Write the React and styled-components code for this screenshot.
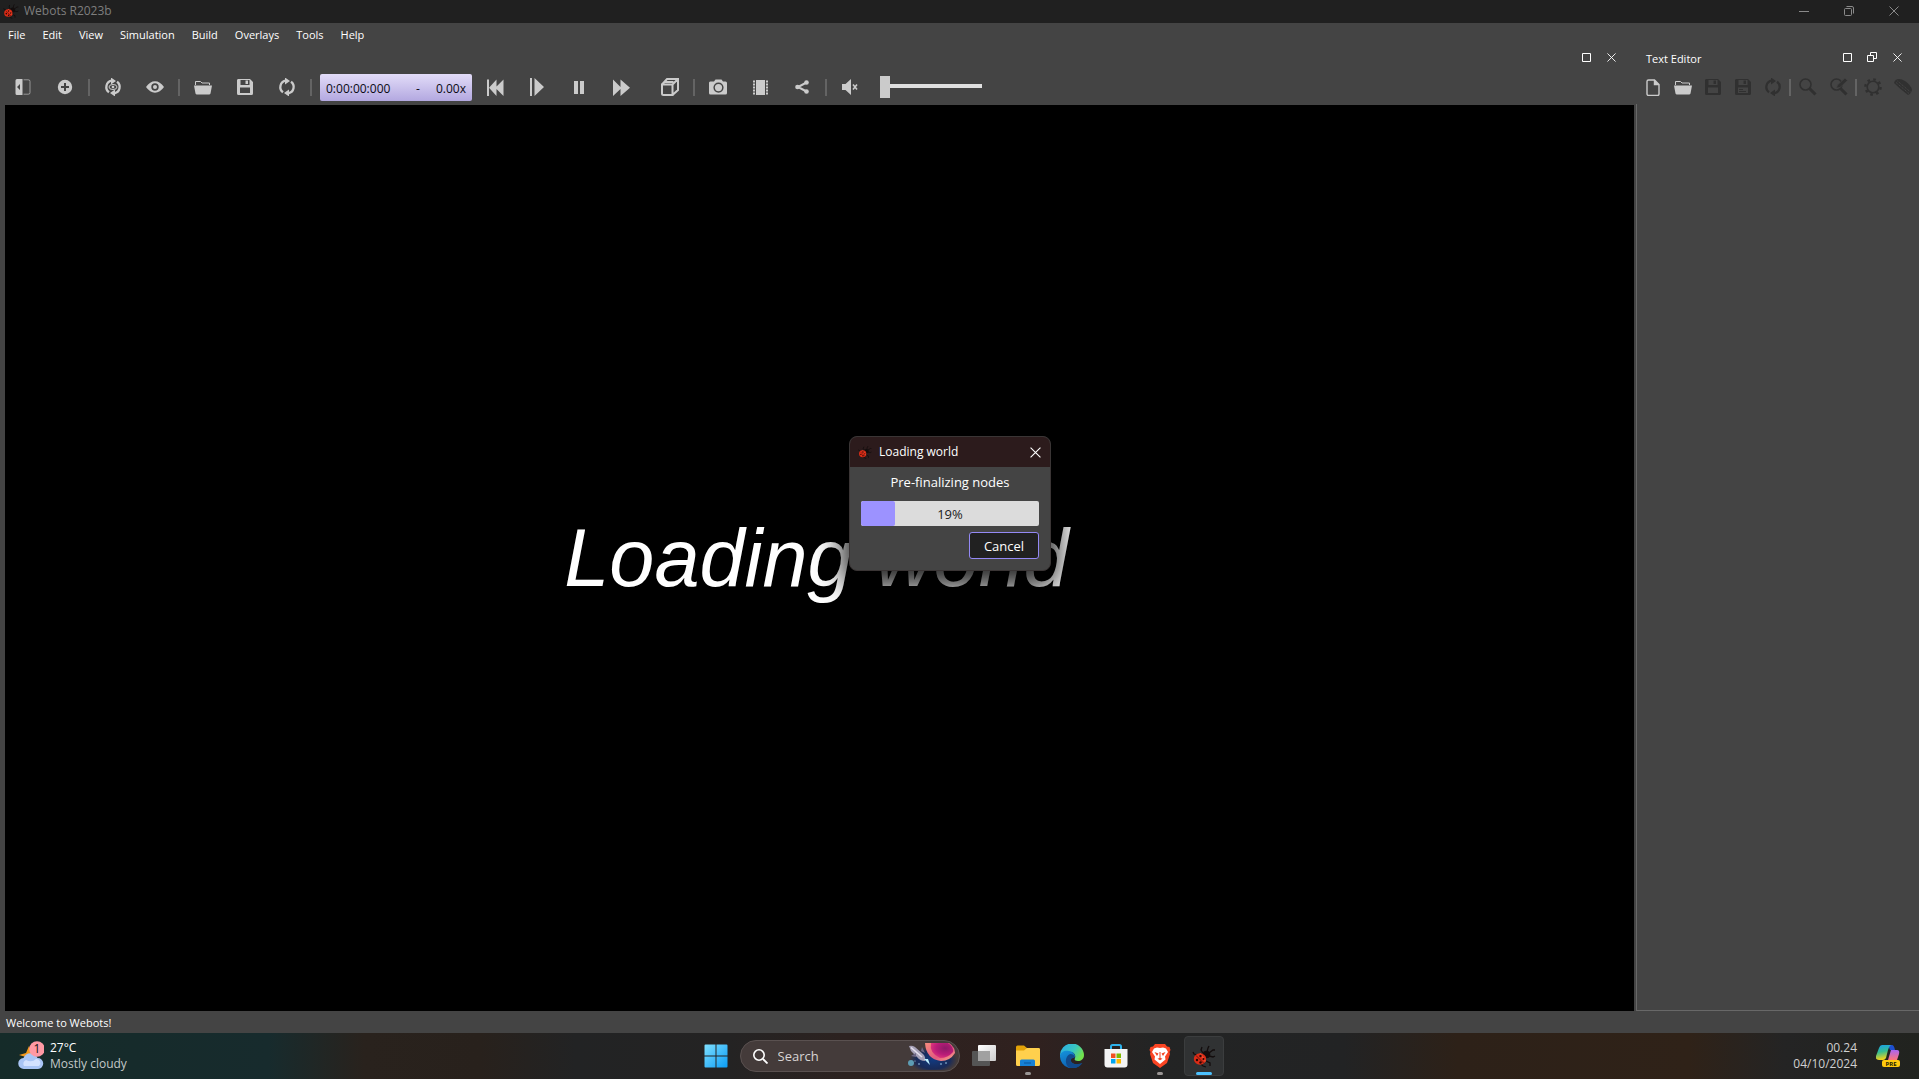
import React from "react";
import styled, { createGlobalStyle } from "styled-components";

const ui = '"Open Sans", "Noto Sans", sans-serif';

const Global = createGlobalStyle`
  *, *::before, *::after { box-sizing: border-box; }
  html, body, #root { height: 100%; }
  body { margin: 0; background: #444; color: #fff; font: 11px/16px ${ui}; overflow: hidden; }
  button { font: inherit; color: inherit; border: 0; padding: 0; background: none; }
  svg { display: block; flex: none; }
`;

const Screen = styled.div`
  position: relative;
  display: flex;
  flex-direction: column;
  height: 100vh;
`;

const TitleBar = styled.header`
  display: flex;
  align-items: center;
  height: 23px;
  padding: 0 14px 2px 3px;
  gap: 5px;
  background: #202020;
  color: #7e7e7e;
`;

const AppTitle = styled.h1`
  margin: 0;
  flex: 1;
  font: 12px/16px ${ui};
`;

const WindowButtons = styled.div`
  display: flex;
  color: #8a8a8a;
  gap: 23px;
`;

const PlainButton = styled.button`
  display: grid;
  place-items: center;
  width: 22px;
  height: 22px;
  flex: none;
`;

const MenuBar = styled.nav`
  display: flex;
  gap: 17px;
  height: 23px;
  padding: 0 8px;
  align-items: center;
`;

const MenuItem = styled.button`
  font: 11px/16px ${ui};
`;

const Workspace = styled.main`
  display: flex;
  flex: 1;
  min-height: 0;
`;

const Simulation = styled.section`
  display: flex;
  flex-direction: column;
  flex: 1;
  min-width: 0;
`;

const Editor = styled.aside`
  display: flex;
  flex-direction: column;
  width: 285px;
  padding-left: 2px;
`;

const DockHeader = styled.div`
  display: flex;
  align-items: flex-start;
  justify-content: flex-end;
  height: 24px;
  padding: 0 ${(p) => p.$right}px 0 10px;
  gap: 3px;
`;

const DockTitle = styled.h2`
  margin: 0 auto 0 0;
  font: 11px/26px ${ui};
`;

const ToolBar = styled.div`
  display: flex;
  align-items: center;
  height: 34px;
  padding-left: 2px;
  overflow: hidden;
`;

const Tool = styled.button`
  display: grid;
  place-items: center;
  flex: none;
  width: ${(p) => p.$w || 42}px;
  height: 30px;
  margin-left: ${(p) => p.$before || 0}px;
  color: ${(p) => (p.disabled ? "#303030" : "#cbcbcb")};
`;

const Divider = styled.span`
  flex: none;
  width: 2px;
  height: 17px;
  margin: 0 ${(p) => p.$m || 2}px;
  background: #646464;
`;

const Clock = styled.output`
  display: flex;
  align-items: center;
  flex: none;
  width: 152px;
  height: 27px;
  margin: 0 2px 0 6px;
  padding: 4px 6px 0;
  border-radius: 2px;
  background: linear-gradient(#e2dcf8, #b3a8e0);
  color: #0b0b14;
  font: 12px/16px ${ui};
`;

const Dash = styled.span`
  margin: 0 16px 0 auto;
`;

const Volume = styled.input`
  appearance: none;
  width: 102px;
  height: 22px;
  margin: 0 0 0 9px;
  background: linear-gradient(#e0e0e0, #e0e0e0) 0 8px / 100% 4px no-repeat;
  &::-webkit-slider-thumb {
    appearance: none;
    width: 10px;
    height: 22px;
    background: #cbcbcb;
  }
`;

const Viewport = styled.div`
  display: grid;
  place-items: center;
  flex: 1;
  margin: 1px 0 0 5px;
  padding-right: 6px;
  background: #000;
  min-height: 0;
`;

const LoadingText = styled.p`
  margin: 0;
  font: italic 81px/92px "Liberation Sans", Arial, sans-serif;
  white-space: nowrap;
`;

const EditorArea = styled.div`
  flex: 1;
  border: solid #686868;
  border-width: 0 0 1px 1px;
`;

const StatusBar = styled.footer`
  height: 22px;
  padding: 4px 6px;
`;

const Dialog = styled.section`
  position: absolute;
  left: 849px;
  top: 436px;
  width: 202px;
  overflow: hidden;
  border: 1px solid #3a3535;
  border-radius: 8px;
  background: #444;
`;

const DialogShade = styled.div`
  position: absolute;
  left: 849px;
  top: 440px;
  width: 202px;
  height: 130px;
  border-radius: 8px;
  box-shadow: 0 10px 28px 7px rgba(0, 0, 0, 0.85);
`;

const DialogTitle = styled.header`
  display: flex;
  align-items: center;
  height: 30px;
  padding: 0 4px 0 8px;
  gap: 7px;
  background: #2c1b1c;
`;

const DialogName = styled.h2`
  margin: 0;
  flex: 1;
  font: 12px/16px ${ui};
`;

const DialogBody = styled.div`
  display: flex;
  flex-direction: column;
  gap: 6px;
  padding: 5px 11px 11px;
  font: 13px/20px ${ui};
`;

const Step = styled.label`
  text-align: center;
  margin-bottom: 3px;
`;

const Bar = styled.div`
  position: relative;
  height: 25px;
  border-radius: 2px;
  overflow: hidden;
  background: #dcdcdc;
`;

const Fill = styled.div`
  height: 100%;
  border-radius: 2px;
  background: #9c92ff;
`;

const Percent = styled.span`
  position: absolute;
  inset: 0;
  padding-top: 3px;
  text-align: center;
  color: #202020;
`;

const Cancel = styled.button`
  align-self: flex-end;
  width: 70px;
  height: 27px;
  border: 1px solid #9489f5;
  border-radius: 3px;
  background: #212121;
`;

const TaskBar = styled.footer`
  display: grid;
  grid-template-columns: 1fr auto 1fr;
  height: 46px;
  background: linear-gradient(90deg, #152b29 0, #172b2d 14%, #29221d 19%, #28211c 25%, #222324 30%, #242323 38%, #2c2220 44%, #30211f 54%, #232424 60%, #222324 70%, #2d2118 76%, #2f2218 88%, #242424 93%, #21231f 100%);
`;

const Weather = styled.button`
  display: flex;
  align-items: center;
  gap: 6px;
  padding-left: 18px;
  text-align: left;
  font: 12px/16px ${ui};
`;

const Soft = styled.div`
  color: #c3c8c8;
`;

const Apps = styled.nav`
  display: flex;
  align-items: center;
`;

const AppButton = styled.button`
  display: flex;
  flex-direction: column;
  align-items: center;
  justify-content: flex-end;
  width: 40px;
  height: 40px;
  margin: 0 2px;
  gap: 4px;
  border-radius: 4px;
  border: 1px solid ${(p) => (p.$active ? "#3b3d3e" : "transparent")};
  background: ${(p) => (p.$active ? "#303233" : "none")};
  &::after {
    content: "";
    width: ${(p) => (p.$active ? 16 : 6)}px;
    height: 3px;
    border-radius: 2px;
    background: ${(p) => (p.$active ? "#4cc2ff" : p.$open ? "#9a9695" : "transparent")};
  }
`;

const SearchBox = styled.label`
  display: flex;
  align-items: center;
  width: 220px;
  height: 32px;
  margin: 0 2px;
  padding: 0 2px 0 12px;
  gap: 10px;
  border: 1px solid #5a5150;
  border-radius: 16px;
  background: #443b3a;
`;

const SearchInput = styled.input`
  flex: 1;
  min-width: 0;
  padding: 0;
  border: 0;
  background: none;
  color: #fff;
  font: 13px/20px ${ui};
  &::placeholder { color: #d8d4d4; opacity: 1; }
`;

const Tray = styled.div`
  display: flex;
  align-items: center;
  justify-content: flex-end;
  gap: 19px;
  padding-right: 19px;
  text-align: right;
  font: 12px/16px ${ui};
  color: #d0d0d0;
`;

const Svg = ({ s = 18, h, vb, children }) => (
  <svg width={s} height={h || s} viewBox={vb || `0 0 ${s} ${h || s}`} fill="currentColor" aria-hidden="true">{children}</svg>
);

const line = { fill: "none", stroke: "currentColor" };

const Bug = ({ s, dark = "#130d0d" }) => (
  <Svg s={s} vb="0 0 24 24">
    <g fill="none" stroke={dark} strokeWidth="1.300">
      <path d="M11 9 9 6l1-3M15 8l1-4 1-2M17 9l4-3h2M17 12l4 1 2-1M14 17l4 2v3M9 20l2 2 3 1M5 11 2 10 1 8" />
    </g>
    <circle cx="14.500" cy="10.500" r="3.800" fill={dark} />
    <ellipse cx="8" cy="15" rx="6.200" ry="5.800" fill="#dc2c16" />
    <path d="m8 9.500 5.500 8" stroke="#f04a2c" strokeWidth="1.500" />
    <path d="m4 11.500 8 8" stroke="#5b0c08" strokeWidth=".8" />
    <g fill="#2b0505"><circle cx="5" cy="16" r="1.200" /><circle cx="8.500" cy="18.500" r="1.200" /><circle cx="8.500" cy="12" r="1.200" /><circle cx="11.500" cy="15" r="1" /></g>
  </Svg>
);

const Cross = ({ s = 10 }) => <Svg s={s} vb="0 0 10 10"><path d="m.5.5 9 9m0-9-9 9" {...line} strokeWidth="1" /></Svg>;
const Square = () => <Svg s={9}><path d="M.5.5h8v8h-8z" {...line} /></Svg>;
const Restore = () => <Svg s={10}><path d="M.5 3.500h6v6h-6zM3.500 3.500v-3h6v6h-3" {...line} /></Svg>;
const SoftRestore = () => <Svg s={10}><rect x=".5" y="2.500" width="7" height="7" rx="1" {...line} /><path d="M2.500.5H8a1.500 1.500 0 0 1 1.500 1.500v5.500" {...line} /></Svg>;

const SidePanel = () => <Svg s={16}><path fillRule="evenodd" d="M2 0h5.500v16H2a1.500 1.500 0 0 1-1.500-1.500v-13A1.500 1.500 0 0 1 2 0zm3 5L2 8l3 3z" /><path d="M8.500.8H13A1.700 1.700 0 0 1 15 2.500v11a1.700 1.700 0 0 1-2 1.700H8.500" {...line} opacity=".6" /></Svg>;
const Plus = () => <Svg s={16}><path fillRule="evenodd" d="M8 .8a7.200 7.200 0 1 1 0 14.400A7.200 7.200 0 0 1 8 .8zM7 4v3H4v2h3v3h2V9h3V7H9V4z" /></Svg>;
const Cycle = ({ children }) => (
  <Svg s={18}>
    <path d="M5 14.300A6.500 6.500 0 0 1 7.500 2.700M13 3.700a6.500 6.500 0 0 1-2.500 11.600" {...line} strokeWidth="2.300" />
    <path d="M7-.5 12 3 7 6.500zM11 11.500v7l-5-3.500z" />
    {children}
  </Svg>
);
const Eye = () => <Svg s={18} h={12}><path fillRule="evenodd" d="M0 6Q4 .3 9 .3T18 6q-4 5.700-9 5.700T0 6zm9-3.700a3.700 3.700 0 1 0 0 7.400 3.700 3.700 0 0 0 0-7.400z" /><circle cx="9" cy="6" r="2" /></Svg>;
const Folder = () => <Svg s={18} h={15}><path d="M1.500 5V1.500h5L8 3h7.500v2" {...line} /><path d="M0 5.500h18l-1.500 8a1.500 1.500 0 0 1-1.500 1H3a1.500 1.500 0 0 1-1.500-1z" /></Svg>;
const Save = ({ lines }) => <Svg s={16}><path fillRule="evenodd" d="M2 0h11l3 3v11.500a1.500 1.500 0 0 1-1.500 1.500h-13A1.500 1.500 0 0 1 0 14.500v-13A1.500 1.500 0 0 1 2 0zm1.500 1v5h9V1zM3 8.500V14h10V8.500z" /><path d="M8.500 1.500h2.500v3.500H8.500z" />{lines && <path d="M4 10h4v1H4zm0 2h7v1H4z" />}</Svg>;
const Rewind = () => <Svg s={17}><path d="M0 .5h2V17H0zM9.500.5v7l7-7V17l-7-7v7L2 8.800z" /></Svg>;
const StepIcon = () => <Svg s={14} h={18}><path d="M0 0h2v18H0zM4.500 0 14 9l-9.500 9z" /></Svg>;
const Pause = () => <Svg s={10} h={13}><path d="M0 0h4v13H0zM6 0h4v13H6z" /></Svg>;
const Forward = () => <Svg s={17}><path d="M0 .5 7.500 8V.5L17 8.800 7.500 17v-7L0 17z" /></Svg>;
const Cube = () => <Svg s={18}><path d="M1 6.500h10.500V17H2.500A1.500 1.500 0 0 1 1 15.500zM1 6.500 6 1h11v11l-5.500 5M11.500 6.500 17 1M4.500 4h8" {...line} strokeWidth="2" /></Svg>;
const Camera = () => <Svg s={18} h={16}><path fillRule="evenodd" d="M2 2.500h3L6.500.5h6L14 2.500h2.500A1.500 1.500 0 0 1 18 4v10a1.500 1.500 0 0 1-1.500 1.500h-15A1.500 1.500 0 0 1 0 14V4a1.500 1.500 0 0 1 2-1.500zm7.500 1a5 5 0 1 0 0 10.200 5 5 0 0 0 0-10.200z" /><circle cx="9.500" cy="8.600" r="3.600" /></Svg>;
const Film = () => <Svg s={15}><path d="M3 0h9v15H3z" /><path d="M1 .5v14M14 .5v14" {...line} strokeWidth="2" strokeDasharray="2 1" /></Svg>;
const Share = () => <Svg s={14}><path d="M11.500 2.500 3 7l8.500 4.500" {...line} strokeWidth="2" /><circle cx="11.500" cy="2.500" r="2.300" /><circle cx="2.500" cy="7" r="2.300" /><circle cx="11.500" cy="11.500" r="2.300" /></Svg>;
const Mute = () => <Svg s={16}><path d="M0 5h3.500L9 0v16l-5.500-5H0z" /><path d="m11 5.500 4 5m0-5-4 5" {...line} strokeWidth="1.600" /></Svg>;
const NewFile = () => <Svg s={14} h={17}><path d="M2.500 1h6L13 5.500V15a1.500 1.500 0 0 1-1.500 1.500h-9A1.500 1.500 0 0 1 1 15V2.500A1.500 1.500 0 0 1 2.500 1zM8.500 1v4.500H13" {...line} strokeWidth="1.400" /><path d="M8.500 1 13 5.500H8.500z" /></Svg>;
const Find = ({ pen }) => <Svg s={18}><circle cx="6.500" cy="6.500" r="5.500" {...line} strokeWidth="1.600" /><path d="m10.500 10.500 6 6" {...line} strokeWidth="3" />{pen && <path d="m6.500 10 1-3L15 0l2.500 2.500L10 9.500z" stroke="#444" strokeWidth=".7" />}</Svg>;
const Gear = () => <Svg s={18}><circle cx="9" cy="9" r="5.800" {...line} strokeWidth="1.600" /><circle cx="9" cy="9" r="7.600" {...line} strokeWidth="2.400" strokeDasharray="2.600 3.370" /></Svg>;
const Brush = () => <Svg s={18}><path d="M0 5Q1 1 5 1q3 0 6 2 6 4 7 9-1 4-4 5Q6 11 0 5z" /><path d="m2 4.500 13 11M3.500 3l13 11" stroke="#4a4a4a" strokeDasharray="1 1" /></Svg>;

const Cloudy = () => (
  <svg width="26" height="30" viewBox="0 0 26 30" aria-hidden="true">
    <path d="m11 5 3 6 5 3-8 6-3-4-7-2 7-2z" fill="#f39a1d" />
    <path d="M6 28a5.500 5.500 0 0 1-.5-11 7.500 7.500 0 0 1 14 0A5.500 5.500 0 0 1 20 28z" fill="#a9c5f5" />
    <path d="M6 25a4 4 0 0 1 2-6q6 3 10-1a4 4 0 0 1 3 7z" fill="#d3e2ff" />
    <circle cx="19" cy="8" r="7.800" fill="#ff99a4" />
    <text x="19" y="12" textAnchor="middle" fontFamily="Open Sans" fontSize="12" fill="#151515">1</text>
  </svg>
);

const Windows = () => (
  <Svg s={24}>
    <defs><linearGradient id="win" x2="1" y2="1"><stop stopColor="#7fe0ff" /><stop offset="1" stopColor="#0a9cf5" /></linearGradient></defs>
    <path fill="url(#win)" d="M.5 1.500a1 1 0 0 1 1-1h10v11H.5zM12.500.5h10a1 1 0 0 1 1 1v10h-11zM.5 12.500h11v11h-10a1 1 0 0 1-1-1zM12.500 12.500h11v10a1 1 0 0 1-1 1h-10z" />
  </Svg>
);

const SpaceArt = () => (
  <Svg s={50} h={28}>
    <defs>
      <radialGradient id="planet" cx=".65" cy=".35" r=".7"><stop stopColor="#8d1a68" /><stop offset=".6" stopColor="#b91c78" /><stop offset="1" stopColor="#e0357c" /></radialGradient>
      <linearGradient id="rim" x2="1" y2="1"><stop stopColor="#f58a7c" /><stop offset=".6" stopColor="#e25a80" /><stop offset="1" stopColor="#ffb08a" /></linearGradient>
      <radialGradient id="sky"><stop stopColor="#123a80" /><stop offset=".7" stopColor="#14295c" stopOpacity=".9" /><stop offset="1" stopColor="#1c2b5b" stopOpacity="0" /></radialGradient>
    </defs>
    <ellipse cx="26" cy="18" rx="24" ry="13" fill="url(#sky)" />
    <path d="M18 1h24q6 4 6 10-5 8-14 8-15-2-16-18z" fill="url(#rim)" />
    <path d="M24 1h17q6 4 5 9-5 6-13 6-11-5-9-15z" fill="url(#planet)" />
    <path d="M2 4q3-1 6 1l8 7q3 3 2 7-5 0-8-4L4 9z" fill="#a5a0b6" />
    <path d="m4 5.500 11 9.500" stroke="#e4e0ee" strokeWidth="1.600" />
    <path d="m9 15-5-1 5-3M14 9l1-4 3 6" fill="#6c6684" />
    <path d="m17 17 6 6-2-6z" fill="#bff1ff" />
    <circle cx="4" cy="21" r="3" fill="#5d9db4" />
    <g fill="#a7d1ee"><circle cx="12" cy="22" r=".8" /><circle cx="8" cy="19" r=".6" /><circle cx="34" cy="22" r=".8" /><circle cx="39" cy="21" r=".8" /></g>
  </Svg>
);

const TaskView = () => (
  <Svg s={24}>
    <defs><linearGradient id="tv" x2="1" y2="1"><stop stopColor="#fff" /><stop offset="1" stopColor="#ccc" /></linearGradient></defs>
    <rect x="6" y="1" width="18" height="16" rx="1" fill="url(#tv)" />
    <rect y="7" width="18" height="15" rx="1" fill="#555" />
    <path d="M6 7h12v10H6z" fill="#a1a1a1" />
  </Svg>
);

const Explorer = () => (
  <Svg s={24}>
    <path d="M0 3a1.500 1.500 0 0 1 1.500-1.500H8L11 4h11.500A1.500 1.500 0 0 1 24 5.500V10H0z" fill="#e3a208" />
    <path d="M0 6.500h8L11 4h11.500A1.500 1.500 0 0 1 24 5.500v15a1.500 1.500 0 0 1-1.500 1.500h-21A1.500 1.500 0 0 1 0 20.500z" fill="#ffd04d" />
    <path d="M4 22v-5a1.500 1.500 0 0 1 1.500-1.500h12A1.500 1.500 0 0 1 19 17v5z" fill="#1681d6" />
    <path d="M8 18.500h7v1H8z" fill="#0a549d" />
  </Svg>
);

const Edge = () => (
  <Svg s={24}>
    <defs>
      <linearGradient id="e1" x2="1" y2=".5"><stop stopColor="#29a9e8" /><stop offset=".6" stopColor="#39c6c1" /><stop offset="1" stopColor="#72e24d" /></linearGradient>
      <linearGradient id="e2" x2=".5" y2="1"><stop stopColor="#1595dd" /><stop offset="1" stopColor="#0d5cae" /></linearGradient>
    </defs>
    <path d="M0 12A12 12 0 0 1 24 11c0 4-3 6-6 6s-4-1-3-3c1-3-1-6-5-6-5 0-9 2-10 4z" fill="url(#e1)" />
    <path d="M0 12c0-4 5-6 9-5 4 .5 6 3 6 6-4-2-6 0-5 3 1 4 6 6 12 3A12 12 0 0 1 0 12z" fill="url(#e2)" />
    <path d="M10 24c-5-2-6-11 0-14 4 0 5 2 4.500 4-5-1-5 6 2 6 2 .3 4-.3 6-1-3 4-7 6-12.500 5z" fill="#114a8b" />
  </Svg>
);

const Store = () => (
  <Svg s={24}>
    <path d="M7 7V2.500A1.500 1.500 0 0 1 8.500 1h7A1.500 1.500 0 0 1 17 2.500V7" fill="none" stroke="#2db3ed" strokeWidth="2" />
    <path d="M.5 5h23v15.500a3 3 0 0 1-3 3h-17a3 3 0 0 1-3-3z" fill="#f4f4f4" />
    <path d="M7 9.500h4.500V14H7z" fill="#f25022" /><path d="M12.500 9.500H17V14h-4.500z" fill="#7fba00" />
    <path d="M7 15h4.500v4.500H7z" fill="#00a4ef" /><path d="M12.500 15H17v4.500h-4.500z" fill="#ffb900" />
  </Svg>
);

const Brave = () => (
  <Svg s={22} h={24}>
    <path d="M6 0h10l2 2.500 2.500.5 1 3-1 2 .5 2-3 9-7 5-7-5-3-9 .5-2-1-2 1-3L4 2.500z" fill="#fb4523" />
    <path d="m11 4 3-.5 3 1L19 8l-3 4.500.5 3L11 20l-5.500-4.500.5-3L3 8l2-3.500 3-1z" fill="#fff" />
    <path d="m5.500 8 4 1.500L8 12zM16.500 8l-4 1.500L14 12zM10.500 8h1v6l2 .8-2.500 1.500-2.500-1.500 2-.8z" fill="#f04121" />
  </Svg>
);

const Copilot = () => (
  <svg width="24" height="24" viewBox="0 0 24 24" role="img" aria-label="Copilot">
    <defs>
      <linearGradient id="c1" x2=".2" y2="1"><stop stopColor="#189df0" /><stop offset=".5" stopColor="#35bd91" /><stop offset="1" stopColor="#f2d31b" /></linearGradient>
      <linearGradient id="c2" x2="0" y2="1"><stop stopColor="#aa65f2" /><stop offset="1" stopColor="#ff7477" /></linearGradient>
    </defs>
    <path d="M12 1h4q2 0 3 5h-5z" fill="#1e4fd0" />
    <path d="M6 1h9q-2 1-3 5l-2 8q-1 2-3 2H3q-4 0-3-4l3-8q1-3 3-3z" fill="url(#c1)" />
    <path d="M15 6h6q3 0 2 4l-2 6h-9z" fill="url(#c2)" />
    <rect x="6" y="16" width="18" height="7" rx="2" fill="#ffc90e" />
    <text x="15" y="22" textAnchor="middle" fontFamily="Open Sans" fontWeight="700" fontSize="6" fill="#201c00">PRE</text>
  </svg>
);

const menus = ["File", "Edit", "View", "Simulation", "Build", "Overlays", "Tools", "Help"];

export default function App() {
  const progress = 19;
  return (
    <>
      <Global />
      <Screen>
        <TitleBar>
          <Bug s={16} />
          <AppTitle>Webots R2023b</AppTitle>
          <WindowButtons>
            <PlainButton aria-label="Minimize"><Svg s={10}><path d="M0 5h10v1H0z" /></Svg></PlainButton>
            <PlainButton aria-label="Restore"><SoftRestore /></PlainButton>
            <PlainButton aria-label="Close"><Cross /></PlainButton>
          </WindowButtons>
        </TitleBar>
        <MenuBar>{menus.map((m) => <MenuItem key={m}>{m}</MenuItem>)}</MenuBar>
        <Workspace>
          <Simulation>
            <DockHeader $right={12}>
              <PlainButton aria-label="Float view"><Square /></PlainButton>
              <PlainButton aria-label="Close view"><Cross s={9} /></PlainButton>
            </DockHeader>
            <ToolBar>
              <Tool aria-label="Scene tree"><SidePanel /></Tool>
              <Tool aria-label="Add node"><Plus /></Tool>
              <Divider />
              <Tool aria-label="Restore viewpoint"><Cycle><ellipse cx="9" cy="9" rx="4" ry="2.500" {...line} strokeWidth="1" /><circle cx="9" cy="9" r="1.300" /></Cycle></Tool>
              <Tool aria-label="View"><Eye /></Tool>
              <Divider />
              <Tool aria-label="Open world"><Folder /></Tool>
              <Tool aria-label="Save world"><Save /></Tool>
              <Tool aria-label="Reload world"><Cycle /></Tool>
              <Divider />
              <Clock><span>0:00:00:000</span><Dash>-</Dash><span>0.00x</span></Clock>
              <Tool aria-label="Reset"><Rewind /></Tool>
              <Tool aria-label="Step"><StepIcon /></Tool>
              <Tool aria-label="Pause"><Pause /></Tool>
              <Tool aria-label="Fast"><Forward /></Tool>
              <Tool $before={7} aria-label="Rendering"><Cube /></Tool>
              <Divider />
              <Tool aria-label="Screenshot"><Camera /></Tool>
              <Tool aria-label="Record movie"><Film /></Tool>
              <Tool aria-label="Share"><Share /></Tool>
              <Divider />
              <Tool aria-label="Mute"><Mute /></Tool>
              <Volume type="range" min="0" max="100" defaultValue="0" aria-label="Volume" />
            </ToolBar>
            <Viewport><LoadingText>Loading world</LoadingText></Viewport>
          </Simulation>
          <Editor>
            <DockHeader $right={11}>
              <DockTitle>Text Editor</DockTitle>
              <PlainButton aria-label="Maximize editor"><Square /></PlainButton>
              <PlainButton aria-label="Float editor"><Restore /></PlainButton>
              <PlainButton aria-label="Close editor"><Cross s={9} /></PlainButton>
            </DockHeader>
            <ToolBar>
              <Tool $w={30} aria-label="New file"><NewFile /></Tool>
              <Tool $w={30} aria-label="Open file"><Folder /></Tool>
              <Tool $w={30} disabled aria-label="Save file"><Save /></Tool>
              <Tool $w={30} disabled aria-label="Save file as"><Save lines /></Tool>
              <Tool $w={30} disabled aria-label="Reload file"><Cycle /></Tool>
              <Divider $m={1} />
              <Tool $w={31} disabled aria-label="Find"><Find /></Tool>
              <Tool $w={31} disabled aria-label="Replace"><Find pen /></Tool>
              <Divider $m={1} />
              <Tool $w={30} disabled aria-label="Build"><Gear /></Tool>
              <Tool $w={30} disabled aria-label="Clean"><Brush /></Tool>
            </ToolBar>
            <EditorArea />
          </Editor>
        </Workspace>
        <StatusBar>Welcome to Webots!</StatusBar>
        <TaskBar>
          <Weather><Cloudy /><div>27°C<Soft>Mostly cloudy</Soft></div></Weather>
          <Apps>
            <AppButton aria-label="Start"><Windows /></AppButton>
            <SearchBox>
              <Svg s={15}><circle cx="6" cy="6" r="5.200" {...line} strokeWidth="1.600" /><path d="m10 10 4.500 4.500" {...line} strokeWidth="1.800" /></Svg>
              <SearchInput placeholder="Search" aria-label="Search" />
              <SpaceArt />
            </SearchBox>
            <AppButton aria-label="Task view"><TaskView /></AppButton>
            <AppButton $open aria-label="File Explorer"><Explorer /></AppButton>
            <AppButton aria-label="Edge"><Edge /></AppButton>
            <AppButton aria-label="Store"><Store /></AppButton>
            <AppButton $open aria-label="Brave"><Brave /></AppButton>
            <AppButton $active aria-label="Webots"><Bug s={24} /></AppButton>
          </Apps>
          <Tray><div>00.24<div>04/10/2024</div></div><Copilot /></Tray>
        </TaskBar>
        <DialogShade />
        <Dialog role="dialog" aria-label="Loading world">
          <DialogTitle>
            <Bug s={14} />
            <DialogName>Loading world</DialogName>
            <PlainButton aria-label="Close dialog"><Cross s={11} /></PlainButton>
          </DialogTitle>
          <DialogBody>
            <Step id="step">Pre-finalizing nodes</Step>
            <Bar role="progressbar" aria-labelledby="step" aria-valuenow={progress}>
              <Fill style={{ width: `${progress}%` }} />
              <Percent>{`${progress}%`}</Percent>
            </Bar>
            <Cancel>Cancel</Cancel>
          </DialogBody>
        </Dialog>
      </Screen>
    </>
  );
}
